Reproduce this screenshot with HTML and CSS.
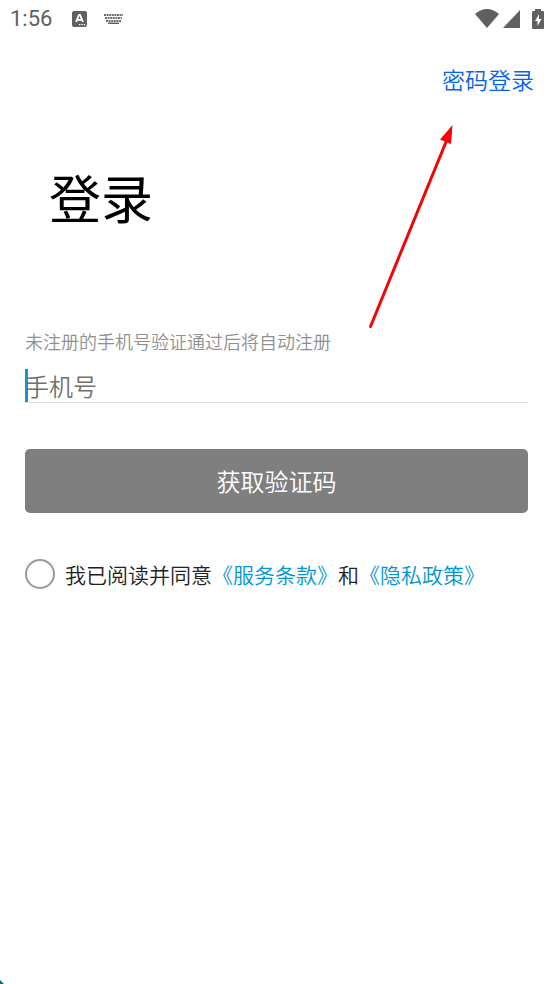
FILE: index.html
```html
<!DOCTYPE html>
<html lang="zh-CN">
<head>
<meta charset="utf-8">
<meta name="viewport" content="width=device-width, initial-scale=1">
<title>登录</title>
<link rel="stylesheet" href="styles.css">
</head>
<body>
<div class="screen">
  <header class="status">
    <div class="status-left">
      <time class="clock">1:56</time>
      <svg class="ime" viewBox="0 0 15 16" aria-hidden="true">
        <rect width="15" height="16" rx="2"/>
        <path d="M4 11 7 4h1l3 7M5.2 8.8h4.6" fill="none" stroke="#fff" stroke-width="1.8"/>
        <path d="M7 13h1.4v1.2H7zM9.4 13h1.4v1.2H9.4zM11.8 13h1.4v1.2h-1.4z" fill="#fff"/>
      </svg>
      <svg class="keyboard" viewBox="0 0 19 10" aria-hidden="true">
        <path d="M0 1h19M1 4h17M2 7h15" fill="none" stroke="#707070" stroke-width="2" stroke-dasharray="2 .6"/>
        <path d="M4 8.5h11V10H4z"/>
      </svg>
    </div>
    <div class="status-right">
      <svg class="wifi" viewBox="0 0 24 19" aria-hidden="true"><path d="M0 5Q12-5 24 5L12 19z"/></svg>
      <svg class="signal" viewBox="0 0 17 18" aria-hidden="true"><path d="M17 0v18H0z"/></svg>
      <svg class="battery" viewBox="0 0 12 20" aria-hidden="true">
        <path d="M3 2V0h6v2h2q1 0 1 1v16q0 1-1 1H1q-1 0-1-1V3q0-1 1-1z"/>
        <path d="M7 5 3 12h2.5v5L9.5 10H7z" fill="#fff"/>
      </svg>
    </div>
  </header>

  <nav class="switch"><a href="#password">密码登录</a></nav>

  <main>
    <h1>登录</h1>
    <form class="login">
      <label class="hint" for="phone">未注册的手机号验证通过后将自动注册</label>
      <div class="field">
        <input id="phone" type="tel" placeholder="手机号">
      </div>
      <button class="submit" type="button">获取验证码</button>
      <div class="agreement">
        <input id="agree" type="checkbox">
        <label for="agree">我已阅读并同意<a href="#terms">《服务条款》</a>和<a href="#privacy">《隐私政策》</a></label>
      </div>
    </form>
  </main>

  <svg class="pointer" viewBox="0 0 84 204" aria-hidden="true">
    <path d="M1.5 201.500 77 17" fill="none" stroke="#f30505" stroke-width="3" stroke-linecap="round"/>
    <path d="M83.500 0 71 14.500l11 4.500z" fill="#f30505"/>
  </svg>
  <svg class="corner" viewBox="0 0 4 4" aria-hidden="true"><path d="M0 0l4 4H0z" fill="#136b7c"/></svg>
</div>
</body>
</html>
```
FILE: styles.css
```css
* { box-sizing: border-box; }

body {
  margin: 0;
  background: #fff;
  color: #222;
  font-family: "Noto Sans CJK SC", sans-serif;
  font-weight: 350;
}

a { text-decoration: none; }

.screen {
  position: relative;
  min-height: 100vh;
  overflow: hidden;
}

.status {
  display: flex;
  justify-content: space-between;
  align-items: center;
  height: 37px;
  padding: 0 10px;
}

.status svg { fill: #606060; }

.status-left,
.status-right {
  display: flex;
  align-items: center;
}

.clock {
  margin-right: 20px;
  color: #606060;
  font: 22px/24px Roboto, sans-serif;
}

.ime { width: 15px; height: 16px; margin-right: 17px; }
.keyboard { width: 19px; height: 10px; }
.wifi { width: 24px; height: 19px; margin-right: 4px; }
.signal { width: 17px; height: 18px; margin-right: 12px; }
.battery { width: 12px; height: 20px; }

.status-right { margin-right: -1px; }

.switch {
  display: flex;
  justify-content: flex-end;
  margin-top: 24px;
  padding-right: 19px;
  font-size: 23px;
  line-height: 36px;
}

.switch a { color: #0662f0; }

main { padding: 0 25px; }

h1 {
  margin: 60px 0 0;
  padding-left: 24px;
  color: #000;
  font-size: 52px;
  font-weight: 400;
  line-height: 80px;
}

.login { margin-top: 90px; }

.hint {
  display: block;
  color: #909090;
  font-size: 18px;
  line-height: 28px;
}

.field {
  display: flex;
  height: 34px;
  margin-top: 14px;
  border-bottom: 1px solid #ddd;
}

/* The caret is drawn on the leading edge of the field. */
.field::before {
  content: "";
  width: 3px;
  margin-right: -3px;
  background: #1593cb;
}

.field input {
  flex: 1;
  min-width: 0;
  padding: 0;
  border: 0;
  outline: 0;
  background: transparent;
  color: #222;
  font: 350 24px/33px "Noto Sans CJK SC", sans-serif;
}

.field input::placeholder { color: #707070; opacity: 1; }

.submit {
  width: 100%;
  height: 64px;
  margin-top: 46px;
  padding: 0;
  border: 0;
  border-radius: 5px;
  background: #7f7f7f;
  color: #fff;
  font: 350 24px/36px "Noto Sans CJK SC", sans-serif;
}

.agreement {
  display: flex;
  align-items: center;
  gap: 10px;
  margin-top: 45px;
  font-size: 21px;
  line-height: 32px;
}

.agreement input {
  flex: none;
  width: 30px;
  height: 30px;
  margin: 0;
  border: 2px solid #999;
  border-radius: 50%;
  appearance: none;
}

.agreement input:checked { background: #1593cb; }

.agreement a { color: #0096d0; }

.pointer {
  position: absolute;
  top: 125px;
  right: 100px;
  width: 84px;
  height: 204px;
}

.corner {
  position: absolute;
  bottom: 0;
  left: 0;
  width: 4px;
  height: 4px;
}
```
